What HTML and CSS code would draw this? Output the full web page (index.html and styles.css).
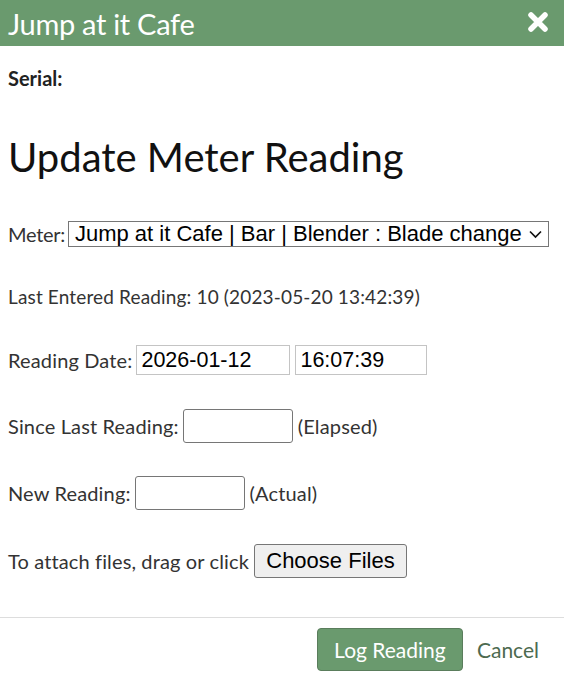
FILE: index.html
```html
<!DOCTYPE html>
<html>
<head>
<meta charset="utf-8">
<link rel="stylesheet" href="styles.css">
</head>
<body>
<div class="dialog">
  <header class="titlebar">
    <span class="title">Jump at it Cafe</span>
    <svg class="close" width="22" height="22" viewBox="0 0 22 22"><path d="M4 4 L18 18 M18 4 L4 18" stroke="#fff" stroke-width="5.5" stroke-linecap="round"/></svg>
  </header>
  <main class="content">
    <div class="serial">Serial:</div>
    <h1 class="heading">Update Meter Reading</h1>
    <div class="rows">
      <div class="row row-meter">
        <label class="meter-label">Meter:</label>
        <div class="select">
          <span>Jump at it Cafe | Bar | Blender : Blade change</span>
          <svg width="15" height="10" viewBox="0 0 15 10"><path d="M2 2.5 L7.5 8 L13 2.5" fill="none" stroke="#111" stroke-width="1.7"/></svg>
        </div>
      </div>
      <div class="row row-last">Last Entered Reading: 10 (2023-05-20 13:42:39)</div>
      <div class="row row-date">
        <label>Reading Date:</label>
        <div class="field date">2026-01-12</div>
        <div class="field time">16:07:39</div>
      </div>
      <div class="row row-since">
        <label>Since Last Reading:</label>
        <div class="num"></div>
        <span>(Elapsed)</span>
      </div>
      <div class="row row-new">
        <label>New Reading:</label>
        <div class="num"></div>
        <span>(Actual)</span>
      </div>
      <div class="row row-attach">
        <span>To attach files, drag or click</span>
        <button class="choose">Choose Files</button>
      </div>
    </div>
  </main>
  <footer class="footer">
    <button class="primary">Log Reading</button>
    <span class="cancel">Cancel</span>
  </footer>
</div>
</body>
</html>
```

FILE: styles.css
```css
html, body {
  margin: 0;
  padding: 0;
  background: #fff;
}
body {
  font-family: "Lato", "Liberation Sans", sans-serif;
  color: #222;
  width: 564px;
  height: 681px;
  overflow: hidden;
}
.dialog {
  display: flex;
  flex-direction: column;
}
.titlebar {
  height: 46px;
  background: #6a9a6e;
  display: flex;
  align-items: center;
  justify-content: space-between;
  padding: 0 15px 0 8px;
}
.title {
  color: #fff;
  font-size: 29px;
  letter-spacing: -0.3px;
}
.close {
  display: block;
  margin-top: -2px;
}
.content {
  padding: 21px 8px 0 8px;
}
.serial {
  font-weight: bold;
  font-size: 20px;
  line-height: 22px;
  color: #222;
}
.heading {
  margin: 44px 0 0 0;
  font-weight: normal;
  font-size: 40px;
  line-height: 48px;
  color: #111;
}
.rows {
  margin-top: 40px;
  display: flex;
  flex-direction: column;
  font-size: 20px;
  letter-spacing: 0.15px;
  color: #333;
}
.row {
  display: flex;
  align-items: center;
  white-space: nowrap;
}
.row-last { margin-top: 38px; line-height: 24px; font-size: 19px; letter-spacing: 0.15px; }
.row-date { margin-top: 36px; }
.row-since { margin-top: 34px; }
.row-new { margin-top: 33px; }
.row-attach { margin-top: 34px; letter-spacing: 0.13px; }
label { margin-right: 4px; }
.meter-label { margin-right: 3px; letter-spacing: -0.3px; }
.select {
  box-sizing: border-box;
  width: 481px;
  height: 26px;
  border: 1px solid #767676;
  display: flex;
  align-items: center;
  justify-content: space-between;
  padding: 0 5px 0 6px;
  font-family: "Liberation Sans", Arial, sans-serif;
  font-size: 22px;
  letter-spacing: 0;
  color: #000;
}
.field {
  box-sizing: border-box;
  height: 30px;
  border: 1px solid #c4c4c4;
  padding: 0 4px;
  display: flex;
  align-items: center;
  font-family: "Liberation Sans", Arial, sans-serif;
  font-size: 21.5px;
  letter-spacing: 0;
  color: #000;
}
.date { width: 154px; }
.time { width: 132px; margin-left: 5px; }
.num {
  box-sizing: border-box;
  width: 110px;
  height: 34px;
  border: 1px solid #767676;
  border-radius: 3px;
  margin-right: 5px;
}
.choose {
  box-sizing: border-box;
  height: 34px;
  width: 153px;
  margin-left: 5px;
  border: 1px solid #767676;
  border-radius: 3px;
  background: #efefef;
  font-family: "Liberation Sans", Arial, sans-serif;
  font-size: 22px;
  letter-spacing: 0;
  color: #000;
  padding: 0;
}
.footer {
  margin-top: 39px;
  border-top: 1px solid #ddd;
  display: flex;
  justify-content: flex-end;
  align-items: center;
  padding: 10px 25px 0 0;
}
.primary {
  box-sizing: border-box;
  width: 146px;
  height: 43px;
  background: #6a9a6e;
  color: #fff;
  border: 1px solid #5a7d5c;
  border-radius: 4px;
  font-family: "Lato", "Liberation Sans", sans-serif;
  font-size: 21px;
  padding: 0;
}
.cancel {
  margin-left: 14px;
  color: #4d6a4f;
  font-size: 21px;
}
```
